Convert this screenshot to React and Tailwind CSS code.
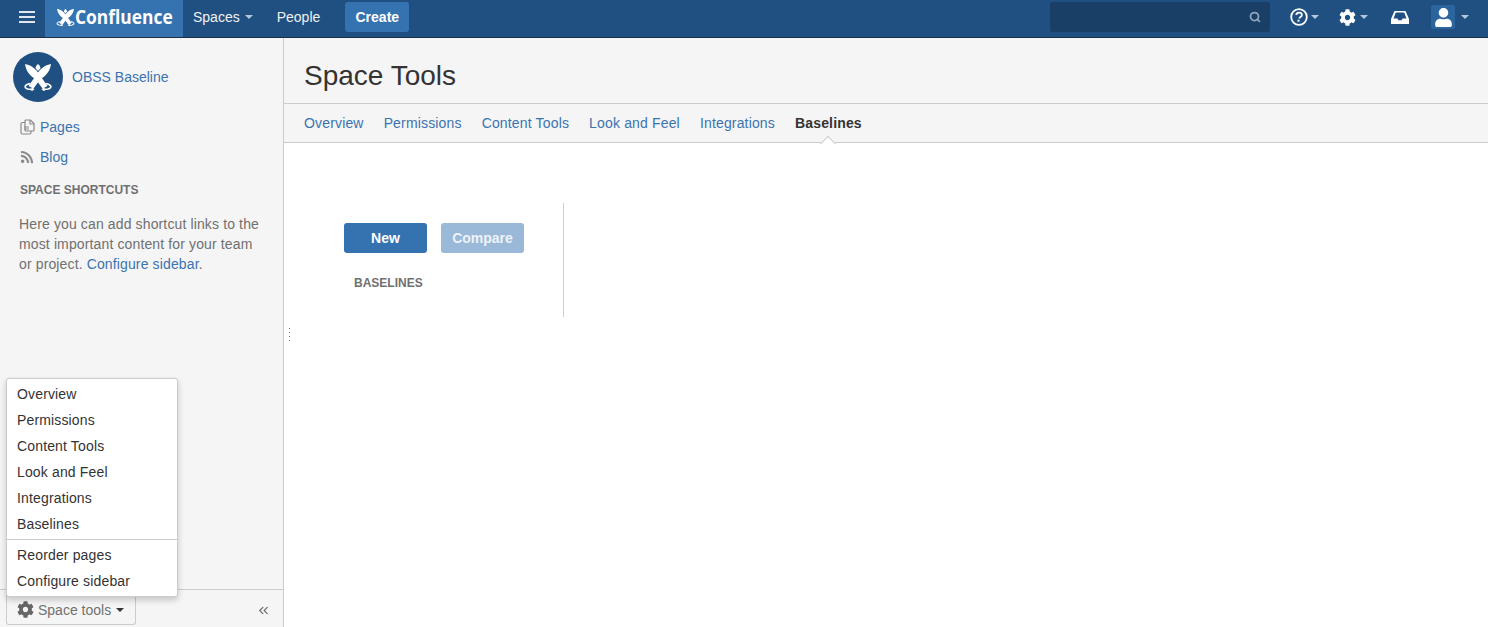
import React from 'react';
import { Search, ChevronsLeft } from 'lucide-react';
import { FaCog, FaUser, FaRss } from 'react-icons/fa';

const Caret = ({ className }) => (
  <svg width="8" height="4" viewBox="0 0 8 4" className={className}>
    <path d="M0 0h8L4 4z" fill="currentColor" />
  </svg>
);

// Confluence crossed mark, used in header and in space logo
const Mark = ({ width = 32, className }) => (
  <svg width={width} height={(width * 28) / 32} viewBox="0 0 32 28" className={className}>
    <path fill="currentColor" d="M3 1c5 1 9.500 3.500 13 8.500L25.500 23l-5 2.500L13.500 16C7.500 12.500 4 8 3 1z" />
    <path fill="currentColor" d="M29 1c-5 1-9.500 3.500-13 8.500L6.500 23l5 2.500L18.500 16C24.500 12.500 28 8 29 1z" />
    <path fill="currentColor" d="M16 1c1.600 1.400 2.400 2.800 2.500 4.200L16 8 13.500 5.200C13.600 3.800 14.400 2.400 16 1z" />
    <path fill="none" stroke="currentColor" strokeWidth="1.600" d="M8 20.500C3 21.500 1 24.500 6 26c1.500.4 3 .5 5 .3" />
    <path fill="none" stroke="currentColor" strokeWidth="1.600" d="M24 20.500c5 1 7 4 2 5.500-1.500.4-3 .5-5 .3" />
    <path fill="currentColor" d="M12.500 26.300 9.500 24v4.500zM19.500 26.300l3-2.300v4.500z" />
  </svg>
);

const tabs = ['Overview', 'Permissions', 'Content Tools', 'Look and Feel', 'Integrations'];
const menuTop = ['Overview', 'Permissions', 'Content Tools', 'Look and Feel', 'Integrations', 'Baselines'];
const menuBottom = ['Reorder pages', 'Configure sidebar'];

const Header = () => (
  <header className="flex h-[38px] shrink-0 items-start bg-[#205081] text-white border-b border-[#1c2f47]">
    <button className="flex h-[34px] w-[45px] items-center pl-[19px]">
      <svg width="16" height="12" viewBox="0 0 16 12" fill="#dfe7f0">
        <rect y="0" width="16" height="2" />
        <rect y="5" width="16" height="2" />
        <rect y="10" width="16" height="2" />
      </svg>
    </button>
    <a className="flex h-[37px] w-[138px] items-center bg-[#3572b0] pb-[3px] pl-[10px]">
      <Mark width={21} className="shrink-0 text-white" />
      <span className="ml-[-1px] origin-left scale-x-[0.87] text-[20px] font-bold font-['Open_Sans',sans-serif]">Confluence</span>
    </a>
    <div className="flex h-[34px] flex-1 items-center pr-[19px]">
      <a className="ml-[10px] flex items-center gap-[5px] text-sm text-[#f0f0f0]">
        Spaces <Caret className="text-[#b5c7da]" />
      </a>
      <a className="ml-6 text-sm text-[#f0f0f0]">People</a>
      <button className="ml-[25px] h-[30px] w-[64px] rounded-[3px] bg-[#3572b0] text-sm font-bold">Create</button>
      <div className="ml-auto flex h-[30px] w-[220px] items-center justify-end rounded-[3px] bg-[#1a3f66] pr-[9px]">
        <Search size={12} strokeWidth={3.5} className="text-[#8fa6bd]" />
      </div>
      <div className="ml-[20px] flex items-center gap-[3px]">
        <svg width="18" height="18" viewBox="0 0 18 18">
          <circle cx="9" cy="9" r="7.800" fill="none" stroke="white" strokeWidth="1.800" />
          <path d="M6.200 7c.2-1.600 1.300-2.400 2.900-2.400 1.700 0 2.800 1 2.800 2.300 0 1.100-.7 1.700-1.500 2.200-.7.4-1 .8-1 1.500" fill="none" stroke="white" strokeWidth="1.800" />
          <rect x="7.500" y="11.700" width="2" height="2" fill="white" />
        </svg>
        <Caret className="text-[#b5c7da]" />
      </div>
      <div className="ml-[20px] flex items-center gap-[4px]">
        <FaCog size={17} />
        <Caret className="text-[#b5c7da]" />
      </div>
      <svg width="18" height="13" viewBox="0 0 18 13" className="ml-[23px]">
        <path fillRule="evenodd" fill="white" d="M3.500 0h11L18 8v5H0V8zM4.800 1.600 2.500 7.600h4l.8 1.600h3.400l.8-1.600h4l-2.300-6z" />
      </svg>
      <div className="ml-[22px] flex h-[24px] w-[24px] items-center justify-center rounded-[2px] bg-[#3572b0]/60">
        <FaUser size={19} />
      </div>
      <Caret className="ml-[6px] text-[#b5c7da]" />
    </div>
  </header>
);

const Sidebar = () => (
  <aside className="relative flex w-[284px] shrink-0 flex-col border-r border-[#cccccc] bg-[#f5f5f5]">
    <div className="flex-1">
      <div className="flex items-center pl-[13px] pt-[14px]">
        <div className="flex h-[50px] w-[50px] items-center justify-center rounded-full bg-[#205081]">
          <Mark width={32} className="text-white" />
        </div>
        <a className="ml-[9px] text-sm text-[#3b73af]">OBSS Baseline</a>
      </div>
      <div className="mt-[10px] pl-[20px]">
        <a className="flex h-[30px] items-center gap-[5px] text-sm text-[#3b73af]">
          <svg width="15" height="16" viewBox="0 0 15 16" fill="none" stroke="#8a8a8a" strokeWidth="1.200">
            <path d="M5 3.500H2.500a1.500 1.500 0 0 0-1.500 1.500v8.500a1.500 1.500 0 0 0 1.500 1.500h7a1.500 1.500 0 0 0 1.500-1.500V12" />
            <path d="M5 2a1 1 0 0 1 1-1h4.500L14 4.500V11a1 1 0 0 1-1 1H6a1 1 0 0 1-1-1z" />
            <path d="M10 1v4h4M4 8h5M4 10h5" />
          </svg>
          Pages
        </a>
        <a className="flex h-[30px] items-center gap-[6px] text-sm text-[#3b73af]">
          <FaRss size={14} className="text-[#8a8a8a]" />
          Blog
        </a>
      </div>
      <h5 className="mt-[8px] pl-[20px] text-xs font-bold leading-[20px] text-[#707070]">SPACE SHORTCUTS</h5>
      <p className="mt-[14px] w-[262px] pl-[19px] text-sm leading-[20px] tracking-[0.13px] text-[#707070]">
        Here you can add shortcut links to the most important content for your team or project. <a className="text-[#3b73af]">Configure sidebar</a>.
      </p>
    </div>
    <div className="flex h-[38px] items-start justify-between border-t border-[#cccccc] pl-[6px] pr-[12px]">
      <button className="flex h-[35px] w-[130px] items-center gap-[4px] rounded-b-[3px] border border-t-0 border-[#cccccc] bg-[#f5f5f5] pl-[10px] pt-[5px] text-sm text-[#707070]">
        <FaCog size={17} className="text-[#666666]" />
        Space tools
        <Caret className="ml-[1px] text-[#333333]" />
      </button>
      <ChevronsLeft size={15} className="mt-[13px] text-[#707070]" />
    </div>
    <div className="absolute left-[6px] top-[340px] w-[172px] rounded-[3px] border border-[#cccccc] bg-white py-[2px] shadow-[0_3px_6px_rgba(0,0,0,0.2)]">
      {menuTop.map((item) => (
        <a key={item} className="block h-[26px] pl-[10px] text-sm leading-[26px] tracking-[0.15px] text-[#333333]">{item}</a>
      ))}
      <div className="mt-[2px] border-t border-[#cccccc] pt-[2px]">
        {menuBottom.map((item) => (
          <a key={item} className="block h-[26px] pl-[10px] text-sm leading-[26px] tracking-[0.15px] text-[#333333]">{item}</a>
        ))}
      </div>
    </div>
  </aside>
);

const Main = () => (
  <main className="relative flex-1 bg-white">
    <div className="border-b border-[#cccccc] bg-[#f5f5f5]">
      <h1 className="flex h-[66px] items-center border-b border-[#cccccc] pl-5 pt-[10px] text-[28px] text-[#333333]">Space Tools</h1>
      <nav className="flex h-[38px] items-center gap-5 pl-5 text-sm tracking-[0.16px]">
        {tabs.map((t) => (
          <a key={t} className="text-[#3b73af]">{t}</a>
        ))}
        <a className="relative font-bold text-[#333333]">
          Baselines
          <span className="absolute left-1/2 top-[25px] h-[11px] w-[11px] -translate-x-1/2 rotate-45 border-l border-t border-[#cccccc] bg-white" />
        </a>
      </nav>
    </div>
    <div className="mt-[60px] h-[114px] w-[280px] border-r border-[#cccccc] pl-[60px] pt-[20px]">
      <div className="flex gap-[14px]">
        <button className="h-[30px] w-[83px] rounded-[3px] bg-[#3572b0] text-sm font-bold text-white">New</button>
        <button className="h-[30px] w-[83px] rounded-[3px] bg-[#9ab8d8] text-sm font-bold text-[#eef3f9]">Compare</button>
      </div>
      <h5 className="ml-[10px] mt-[20px] text-xs font-bold leading-[20px] text-[#707070]">BASELINES</h5>
    </div>
    <div className="absolute left-[5px] top-[290px] flex flex-col gap-[3px]">
      {[0, 1, 2, 3].map((i) => (
        <span key={i} className="h-px w-px bg-[#707070]" />
      ))}
    </div>
  </main>
);

export default function App() {
  return (
    <div className="flex h-[627px] flex-col overflow-hidden bg-white font-['Liberation_Sans',Arial,sans-serif]">
      <Header />
      <div className="flex flex-1">
        <Sidebar />
        <Main />
      </div>
    </div>
  );
}
